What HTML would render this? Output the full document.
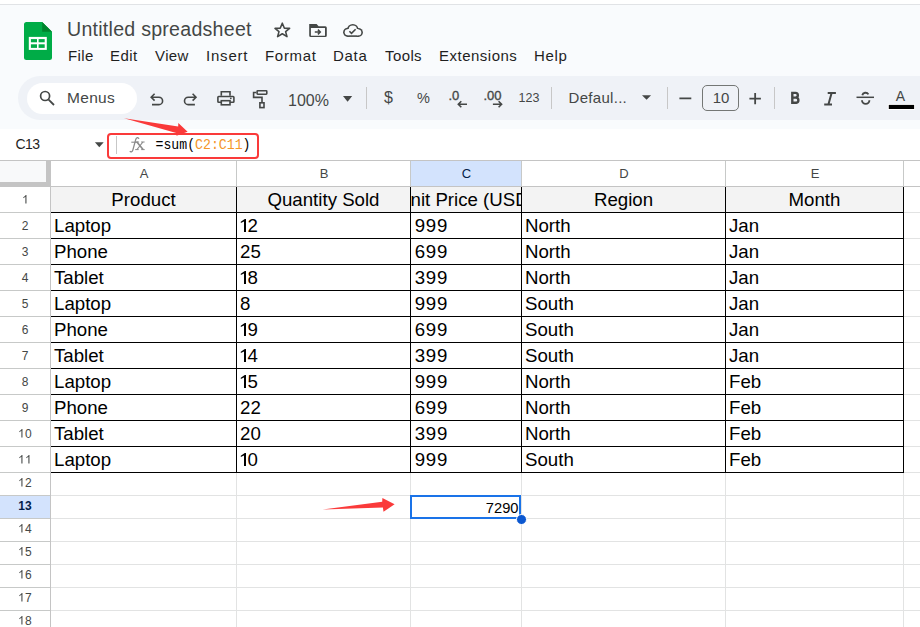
<!DOCTYPE html>
<html><head><meta charset="utf-8">
<style>
*{box-sizing:border-box;margin:0;padding:0}
html,body{width:920px;height:627px;overflow:hidden;background:#fff;font-family:"Liberation Sans",sans-serif;}
.a{position:absolute;white-space:nowrap}
#hdr{position:absolute;left:0;top:5px;width:920px;height:124px;background:#f9fbfd}
#topline{position:absolute;left:0;top:4px;width:920px;height:1px;background:#e1e3e6}
#tb{position:absolute;left:18px;top:76px;width:940px;height:44px;background:#eff2f7;border-radius:22px}
#search{position:absolute;left:27px;top:83px;width:110px;height:31px;background:#fff;border-radius:16px}
.menu{position:absolute;top:47px;font-size:15px;letter-spacing:0.4px;color:#1f1f1f;line-height:18px}
.tbt{position:absolute;font-size:15px;color:#444746;line-height:18px}
.sep{position:absolute;width:1px;background:#c7c7c7;top:87px;height:22px}
.vl{position:absolute;width:1px;background:#e2e3e3}
.hl{position:absolute;height:1px;background:#e2e3e3}
.rh{position:absolute;left:0;width:50px;text-align:center;font-size:12px;color:#444746}
.ch{position:absolute;top:160px;height:26px;line-height:26px;text-align:center;font-size:13px;color:#444746}
.c{position:absolute;font-size:18.67px;color:#000;line-height:26px;overflow:hidden;white-space:nowrap}
</style></head><body>
<div id="topline"></div>
<div id="hdr"></div>
<!-- logo -->
<svg class="a" style="left:24px;top:22px" width="28" height="38" viewBox="0 0 28 38">
<path d="M2.5 0H18.2L28 9.8V35.5a2.5 2.5 0 0 1-2.5 2.5H2.5A2.5 2.5 0 0 1 0 35.5V2.5A2.5 2.5 0 0 1 2.5 0z" fill="#00ac47"/>
<path d="M18.2 0L28 9.8H18.2z" fill="#00832d"/>
<rect x="4.8" y="14.9" width="18" height="13" fill="#fff"/>
<rect x="6.9" y="17.1" width="6.1" height="3.2" fill="#00ac47"/>
<rect x="14.6" y="17.1" width="6.1" height="3.2" fill="#00ac47"/>
<rect x="6.9" y="22.3" width="6.1" height="3.6" fill="#00ac47"/>
<rect x="14.6" y="22.3" width="6.1" height="3.6" fill="#00ac47"/>
</svg>
<div class="a" style="left:67px;top:18px;font-size:19.6px;letter-spacing:0.25px;color:#444746;line-height:22px">Untitled spreadsheet</div>
<div class="menu" style="left:68px">File</div>
<div class="menu" style="left:110px">Edit</div>
<div class="menu" style="left:155px">View</div>
<div class="menu" style="left:206px;letter-spacing:0.8px">Insert</div>
<div class="menu" style="left:265px;letter-spacing:0.7px">Format</div>
<div class="menu" style="left:333px;letter-spacing:0.7px">Data</div>
<div class="menu" style="left:385px">Tools</div>
<div class="menu" style="left:439px;letter-spacing:0.5px">Extensions</div>
<div class="menu" style="left:534px;letter-spacing:0.7px">Help</div>

<div id="tb"></div>
<div id="search"></div>
<div class="tbt" style="left:67px;top:89px;font-size:15.5px;letter-spacing:0.3px">Menus</div>
<div class="tbt" style="left:288px;top:92px;font-size:16px">100%</div>
<div class="tbt" style="left:384px;top:88.5px;font-size:16px">$</div>
<div class="tbt" style="left:417px;top:89px;font-size:14.5px">%</div>
<div class="tbt" style="left:518.5px;top:89px;font-size:12.5px">123</div>
<div class="tbt" style="left:568.5px;top:89px;letter-spacing:0.3px">Defaul...</div>
<div class="a" style="left:702px;top:85px;width:37px;height:26px;border:1px solid #747775;border-radius:5px"></div>
<div class="tbt" style="left:702.5px;top:89px;width:37px;text-align:center;font-size:15px">10</div>
<div class="sep" style="left:366px"></div>
<div class="sep" style="left:551px"></div>
<div class="sep" style="left:667px"></div>
<div class="sep" style="left:774px"></div>
<svg class="a" style="left:0;top:0" width="920" height="160" viewBox="0 0 920 160" fill="none" stroke="#444746" stroke-width="1.6">
 <!-- star -->
 <polygon points="282.3,23.2 284.4,28.3 289.6,28.4 285.6,31.6 287.0,36.6 282.3,33.7 277.6,36.6 279.0,31.6 275.0,28.4 280.2,28.3" stroke-linejoin="round"/>
 <!-- folder -->
 <path d="M309.2,24.1 H316.6 L318.6,26.2 H325.3 A1.5,1.5 0 0 1 326.8,27.7 V35.4 A1.5,1.5 0 0 1 325.3,36.9 H310.7 A1.5,1.5 0 0 1 309.2,35.4 Z M310.9,28 V35.7 H325 V28 Z" fill="#444746" fill-rule="evenodd" stroke="none"/>
 <path d="M314.8,32 H320.2 M317.9,29.6 L320.3,32 L317.9,34.4" stroke-width="1.5"/>
 <!-- cloud -->
 <g fill="#444746" stroke="none">
  <circle cx="352.8" cy="29.6" r="5.7"/><circle cx="347.7" cy="32.3" r="4.6"/><circle cx="358.4" cy="32.4" r="4.5"/><rect x="347.7" y="30" width="10.7" height="6.9"/>
 </g>
 <g fill="#f9fbfd" stroke="none">
  <circle cx="352.8" cy="29.6" r="4.1"/><circle cx="347.7" cy="32.3" r="3.0"/><circle cx="358.4" cy="32.4" r="2.9"/><rect x="347.7" y="29" width="10.7" height="6.3"/>
 </g>
 <polyline points="349.4,31.3 351.5,33.4 355.6,29.3"/>
 <!-- search -->
 <circle cx="45.1" cy="96" r="4.5" stroke-width="1.7"/>
 <path d="M48.6,99.6 L54,105" stroke-width="1.8"/>
 <!-- undo -->
 <path d="M152,104.6 H158.9 A3.7,3.7 0 0 0 158.9,97.2 H151.2 M154.6,93.8 L151.2,97.2 L154.6,100.6"/>
 <!-- redo -->
 <path d="M194.9,104.6 H188.2 A3.7,3.7 0 0 1 188.2,97.2 H196 M192.6,93.8 L196,97.2 L192.6,100.6"/>
 <!-- print -->
 <path d="M221.3,95.8 V91.7 H230 V95.8"/>
 <rect x="217.9" y="96.5" width="16" height="5.8" rx="0.8"/>
 <rect x="221.3" y="100.7" width="8.7" height="4.1" fill="#eff2f7"/>
 <circle cx="230.8" cy="98.3" r="0.9" fill="#444746" stroke="none"/>
 <!-- paint format -->
 <rect x="257.1" y="90.8" width="9.7" height="3.4" rx="0.6"/>
 <path d="M256.3,92.5 H253.6 V97.4 H262 V102.4"/>
 <rect x="259.9" y="102.8" width="4.1" height="4.8"/>
 <!-- dropdowns -->
 <path d="M343,96 H352.2 L347.6,101.7 Z" fill="#444746" stroke="none"/>
 <path d="M642,95.2 H651.1 L646.55,99.8 Z" fill="#444746" stroke="none"/>
 <!-- minus plus -->
 <path d="M679.4,98.4 H691.3 M749.4,98.6 H760.9 M755.15,92.9 V104.3" stroke-width="1.8"/>
 <!-- bold -->
 <path d="M792.3,92.9 H795.5 A2.35,2.35 0 0 1 795.5,97.6 H792.3 M792.3,97.6 H796.3 A2.6,2.6 0 0 1 796.3,102.7 H792.3 V92.9" stroke-width="2.4" stroke-linejoin="miter" stroke-linecap="square"/>
 <!-- italic -->
 <path d="M827.7,93 H835.9 M824.2,104.6 H832 M831.6,93 L828.4,104.6" stroke-width="2"/>
 <!-- strike -->
 <path d="M856.5,97.3 H874" stroke-width="1.5"/>
 <path d="M862.3,95.3 A3.3,3.3 0 0 1 868.4,94.4 M862,100.2 A3.7,3.7 0 0 0 869.4,100.2" stroke-width="1.9"/>
 <!-- dec arrows -->
 <path d="M458.3,104.2 H467 M461.3,101.2 L458.3,104.2 L461.3,107.2 M492.9,104.2 H501.6 M498.6,101.2 L501.6,104.2 L498.6,107.2" stroke-width="1.6"/>
 <!-- text color A bar -->
 <rect x="887.8" y="103.9" width="27.3" height="6.1" fill="#fff" stroke="none"/><rect x="888.8" y="104.9" width="25.3" height="4.1" fill="#000" stroke="none"/>
 <!-- red arrow 1 -->
</svg>
<div class="tbt" style="left:895.7px;top:87px;font-size:14px">A</div>
<div class="a" style="left:448.4px;top:88.8px;font-size:13px;-webkit-text-stroke:0.35px #444746;color:#444746;line-height:14px">.0</div>
<div class="a" style="left:483.5px;top:88.8px;font-size:13px;-webkit-text-stroke:0.35px #444746;color:#444746;line-height:14px">.00</div>

<!-- name box / formula -->
<div class="a" style="left:15.5px;top:136px;font-size:14px;letter-spacing:-0.6px;color:#1f1f1f;line-height:16px">C13</div>
<svg class="a" style="left:0;top:125px" width="300" height="40" viewBox="0 125 300 40">
 <path d="M94.9,142.3 H103.7 L99.3,147.2 Z" fill="#444746"/>
 <rect x="116" y="136" width="1" height="18" fill="#c7c7c7"/>
</svg>
<svg class="a" style="left:120px;top:130px" width="40" height="30" viewBox="120 130 40 30" fill="none" stroke="#8a8a8a">
 <path d="M138.8,138.9 C138.6,137.1 136.3,137.2 135.7,139.6 L132.9,149.9 C132.4,152 130.6,152.4 129.9,151.1" stroke-width="1.3"/>
 <path d="M131.3,142.2 H137.9" stroke-width="1.1"/>
 <path d="M136.9,142 L143.1,149.5" stroke-width="1.6"/>
 <path d="M142.9,142 L137,149.5" stroke-width="1.2"/>
 <path d="M135.4,142 H139.1 M141.1,142 H144.6 M135.2,149.6 H138.7 M141.2,149.6 H144.7" stroke-width="1"/>
</svg>
<div class="a" style="left:155.5px;top:136px;font-family:'Liberation Mono',monospace;font-size:13.2px;letter-spacing:0px;color:#000;line-height:16px;transform:scaleY(1.15);transform-origin:0 0">=sum(<span style="color:#f5962a">C2:C11</span>)</div>
<div class="a" style="left:107px;top:133px;width:152px;height:26px;border:2px solid #fa3a3a;border-radius:4px"></div>

<div id="grid">
<div class="a" style="left:0;top:160px;width:920px;height:467px;background:#fff"></div>
<div class="a" style="left:0;top:161px;width:46px;height:21px;background:#f8f9fa"></div>
<div class="a" style="left:46px;top:161px;width:4px;height:25px;background:#c4c4c4"></div>
<div class="a" style="left:0;top:182px;width:50px;height:4px;background:#c4c4c4"></div>
<div class="a" style="left:411px;top:161px;width:110px;height:25px;background:#d3e3fd"></div>
<div class="a" style="left:0;top:496px;width:50px;height:22px;background:#d3e3fd"></div>
<div class="a" style="left:51px;top:187px;width:852px;height:25px;background:#f3f3f3"></div>
<div class="a" style="left:51px;top:212px;width:869px;height:1px;background:#e2e3e3"></div>
<div class="a" style="left:0;top:212px;width:50px;height:1px;background:#c7c9c8"></div>
<div class="a" style="left:51px;top:238px;width:869px;height:1px;background:#e2e3e3"></div>
<div class="a" style="left:0;top:238px;width:50px;height:1px;background:#c7c9c8"></div>
<div class="a" style="left:51px;top:264px;width:869px;height:1px;background:#e2e3e3"></div>
<div class="a" style="left:0;top:264px;width:50px;height:1px;background:#c7c9c8"></div>
<div class="a" style="left:51px;top:290px;width:869px;height:1px;background:#e2e3e3"></div>
<div class="a" style="left:0;top:290px;width:50px;height:1px;background:#c7c9c8"></div>
<div class="a" style="left:51px;top:316px;width:869px;height:1px;background:#e2e3e3"></div>
<div class="a" style="left:0;top:316px;width:50px;height:1px;background:#c7c9c8"></div>
<div class="a" style="left:51px;top:342px;width:869px;height:1px;background:#e2e3e3"></div>
<div class="a" style="left:0;top:342px;width:50px;height:1px;background:#c7c9c8"></div>
<div class="a" style="left:51px;top:368px;width:869px;height:1px;background:#e2e3e3"></div>
<div class="a" style="left:0;top:368px;width:50px;height:1px;background:#c7c9c8"></div>
<div class="a" style="left:51px;top:394px;width:869px;height:1px;background:#e2e3e3"></div>
<div class="a" style="left:0;top:394px;width:50px;height:1px;background:#c7c9c8"></div>
<div class="a" style="left:51px;top:420px;width:869px;height:1px;background:#e2e3e3"></div>
<div class="a" style="left:0;top:420px;width:50px;height:1px;background:#c7c9c8"></div>
<div class="a" style="left:51px;top:446px;width:869px;height:1px;background:#e2e3e3"></div>
<div class="a" style="left:0;top:446px;width:50px;height:1px;background:#c7c9c8"></div>
<div class="a" style="left:51px;top:472px;width:869px;height:1px;background:#e2e3e3"></div>
<div class="a" style="left:0;top:472px;width:50px;height:1px;background:#c7c9c8"></div>
<div class="a" style="left:51px;top:495px;width:869px;height:1px;background:#e2e3e3"></div>
<div class="a" style="left:0;top:495px;width:50px;height:1px;background:#c7c9c8"></div>
<div class="a" style="left:51px;top:518px;width:869px;height:1px;background:#e2e3e3"></div>
<div class="a" style="left:0;top:518px;width:50px;height:1px;background:#c7c9c8"></div>
<div class="a" style="left:51px;top:541px;width:869px;height:1px;background:#e2e3e3"></div>
<div class="a" style="left:0;top:541px;width:50px;height:1px;background:#c7c9c8"></div>
<div class="a" style="left:51px;top:564px;width:869px;height:1px;background:#e2e3e3"></div>
<div class="a" style="left:0;top:564px;width:50px;height:1px;background:#c7c9c8"></div>
<div class="a" style="left:51px;top:587px;width:869px;height:1px;background:#e2e3e3"></div>
<div class="a" style="left:0;top:587px;width:50px;height:1px;background:#c7c9c8"></div>
<div class="a" style="left:51px;top:610px;width:869px;height:1px;background:#e2e3e3"></div>
<div class="a" style="left:0;top:610px;width:50px;height:1px;background:#c7c9c8"></div>
<div class="a" style="left:51px;top:633px;width:869px;height:1px;background:#e2e3e3"></div>
<div class="a" style="left:0;top:633px;width:50px;height:1px;background:#c7c9c8"></div>
<div class="a" style="left:236px;top:161px;width:1px;height:25px;background:#c7c9c8"></div>
<div class="a" style="left:236px;top:187px;width:1px;height:440px;background:#e2e3e3"></div>
<div class="a" style="left:410px;top:161px;width:1px;height:25px;background:#c7c9c8"></div>
<div class="a" style="left:410px;top:187px;width:1px;height:440px;background:#e2e3e3"></div>
<div class="a" style="left:521px;top:161px;width:1px;height:25px;background:#c7c9c8"></div>
<div class="a" style="left:521px;top:187px;width:1px;height:440px;background:#e2e3e3"></div>
<div class="a" style="left:725px;top:161px;width:1px;height:25px;background:#c7c9c8"></div>
<div class="a" style="left:725px;top:187px;width:1px;height:440px;background:#e2e3e3"></div>
<div class="a" style="left:903px;top:161px;width:1px;height:25px;background:#c7c9c8"></div>
<div class="a" style="left:903px;top:187px;width:1px;height:440px;background:#e2e3e3"></div>
<div class="a" style="left:0;top:160px;width:920px;height:1px;background:#c4c4c4"></div>
<div class="a" style="left:0;top:186px;width:920px;height:1px;background:#c4c4c4"></div>
<div class="a" style="left:50px;top:160px;width:1px;height:467px;background:#c4c4c4"></div>
<div class="a" style="left:51px;top:212px;width:853px;height:1px;background:#000"></div>
<div class="a" style="left:51px;top:238px;width:853px;height:1px;background:#000"></div>
<div class="a" style="left:51px;top:264px;width:853px;height:1px;background:#000"></div>
<div class="a" style="left:51px;top:290px;width:853px;height:1px;background:#000"></div>
<div class="a" style="left:51px;top:316px;width:853px;height:1px;background:#000"></div>
<div class="a" style="left:51px;top:342px;width:853px;height:1px;background:#000"></div>
<div class="a" style="left:51px;top:368px;width:853px;height:1px;background:#000"></div>
<div class="a" style="left:51px;top:394px;width:853px;height:1px;background:#000"></div>
<div class="a" style="left:51px;top:420px;width:853px;height:1px;background:#000"></div>
<div class="a" style="left:51px;top:446px;width:853px;height:1px;background:#000"></div>
<div class="a" style="left:51px;top:472px;width:853px;height:1px;background:#000"></div>
<div class="a" style="left:236px;top:187px;width:1px;height:286px;background:#000"></div>
<div class="a" style="left:410px;top:187px;width:1px;height:286px;background:#000"></div>
<div class="a" style="left:521px;top:187px;width:1px;height:286px;background:#000"></div>
<div class="a" style="left:725px;top:187px;width:1px;height:286px;background:#000"></div>
<div class="a" style="left:903px;top:187px;width:1px;height:286px;background:#000"></div>
<div class="ch" style="left:51.5px;top:161px;width:185px;color:#444746">A</div>
<div class="ch" style="left:237.5px;top:161px;width:173px;color:#444746">B</div>
<div class="ch" style="left:411.5px;top:161px;width:110px;color:#041e49">C</div>
<div class="ch" style="left:522.5px;top:161px;width:203px;color:#444746">D</div>
<div class="ch" style="left:726.5px;top:161px;width:177px;color:#444746">E</div>
<div class="rh" style="top:188px;height:25px;line-height:25px;"><svg width="6.67" height="8.59" viewBox="0 0 55.6 71.6" style="vertical-align:baseline"><path d="M37.3,71.6 V0 H30.5 C27,7 19,14.5 10.9,18 V26.5 C16.5,24.3 23.5,20 28.3,15.5 V71.6 Z" fill="#444746"/></svg></div>
<div class="rh" style="top:214px;height:25px;line-height:25px;">2</div>
<div class="rh" style="top:240px;height:25px;line-height:25px;">3</div>
<div class="rh" style="top:266px;height:25px;line-height:25px;">4</div>
<div class="rh" style="top:292px;height:25px;line-height:25px;">5</div>
<div class="rh" style="top:318px;height:25px;line-height:25px;">6</div>
<div class="rh" style="top:344px;height:25px;line-height:25px;">7</div>
<div class="rh" style="top:370px;height:25px;line-height:25px;">8</div>
<div class="rh" style="top:396px;height:25px;line-height:25px;">9</div>
<div class="rh" style="top:422px;height:25px;line-height:25px;"><svg width="6.67" height="8.59" viewBox="0 0 55.6 71.6" style="vertical-align:baseline"><path d="M37.3,71.6 V0 H30.5 C27,7 19,14.5 10.9,18 V26.5 C16.5,24.3 23.5,20 28.3,15.5 V71.6 Z" fill="#444746"/></svg>0</div>
<div class="rh" style="top:448px;height:25px;line-height:25px;"><svg width="6.67" height="8.59" viewBox="0 0 55.6 71.6" style="vertical-align:baseline"><path d="M37.3,71.6 V0 H30.5 C27,7 19,14.5 10.9,18 V26.5 C16.5,24.3 23.5,20 28.3,15.5 V71.6 Z" fill="#444746"/></svg><svg width="6.67" height="8.59" viewBox="0 0 55.6 71.6" style="vertical-align:baseline"><path d="M37.3,71.6 V0 H30.5 C27,7 19,14.5 10.9,18 V26.5 C16.5,24.3 23.5,20 28.3,15.5 V71.6 Z" fill="#444746"/></svg></div>
<div class="rh" style="top:472px;height:22px;line-height:22px;"><svg width="6.67" height="8.59" viewBox="0 0 55.6 71.6" style="vertical-align:baseline"><path d="M37.3,71.6 V0 H30.5 C27,7 19,14.5 10.9,18 V26.5 C16.5,24.3 23.5,20 28.3,15.5 V71.6 Z" fill="#444746"/></svg>2</div>
<div class="rh" style="top:495px;height:22px;line-height:22px;font-weight:bold;color:#041e49;">13</div>
<div class="rh" style="top:518px;height:22px;line-height:22px;"><svg width="6.67" height="8.59" viewBox="0 0 55.6 71.6" style="vertical-align:baseline"><path d="M37.3,71.6 V0 H30.5 C27,7 19,14.5 10.9,18 V26.5 C16.5,24.3 23.5,20 28.3,15.5 V71.6 Z" fill="#444746"/></svg>4</div>
<div class="rh" style="top:541px;height:22px;line-height:22px;"><svg width="6.67" height="8.59" viewBox="0 0 55.6 71.6" style="vertical-align:baseline"><path d="M37.3,71.6 V0 H30.5 C27,7 19,14.5 10.9,18 V26.5 C16.5,24.3 23.5,20 28.3,15.5 V71.6 Z" fill="#444746"/></svg>5</div>
<div class="rh" style="top:564px;height:22px;line-height:22px;"><svg width="6.67" height="8.59" viewBox="0 0 55.6 71.6" style="vertical-align:baseline"><path d="M37.3,71.6 V0 H30.5 C27,7 19,14.5 10.9,18 V26.5 C16.5,24.3 23.5,20 28.3,15.5 V71.6 Z" fill="#444746"/></svg>6</div>
<div class="rh" style="top:587px;height:22px;line-height:22px;"><svg width="6.67" height="8.59" viewBox="0 0 55.6 71.6" style="vertical-align:baseline"><path d="M37.3,71.6 V0 H30.5 C27,7 19,14.5 10.9,18 V26.5 C16.5,24.3 23.5,20 28.3,15.5 V71.6 Z" fill="#444746"/></svg>7</div>
<div class="rh" style="top:610px;height:22px;line-height:22px;"><svg width="6.67" height="8.59" viewBox="0 0 55.6 71.6" style="vertical-align:baseline"><path d="M37.3,71.6 V0 H30.5 C27,7 19,14.5 10.9,18 V26.5 C16.5,24.3 23.5,20 28.3,15.5 V71.6 Z" fill="#444746"/></svg>8</div>
<div class="c" style="left:51px;top:187px;width:185px;height:25px;display:flex;justify-content:center"><span style="flex:none">Product</span></div>
<div class="c" style="left:237px;top:187px;width:173px;height:25px;display:flex;justify-content:center"><span style="flex:none">Quantity Sold</span></div>
<div class="c" style="left:411px;top:187px;width:110px;height:25px;display:flex;justify-content:center"><span style="flex:none">Unit Price (USD)</span></div>
<div class="c" style="left:522px;top:187px;width:203px;height:25px;display:flex;justify-content:center"><span style="flex:none">Region</span></div>
<div class="c" style="left:726px;top:187px;width:177px;height:25px;display:flex;justify-content:center"><span style="flex:none">Month</span></div>
<div class="c" style="left:51px;top:213px;width:185px;height:25px;padding-left:3px;">Laptop</div>
<div class="c" style="left:237px;top:213px;width:173px;height:25px;padding-left:3px;"><svg width="7.60" height="13.10" viewBox="0 5.9 7.6 13.1" style="vertical-align:baseline"><path d="M4.0,19 V8.4 L0.8,10.0 V8.6 L4.8,5.9 H6.0 V19 Z" fill="#000"/></svg>2</div>
<div class="c" style="left:411px;top:213px;width:110px;height:25px;padding-left:3px;letter-spacing:0.7px;padding-left:3.8px;">999</div>
<div class="c" style="left:522px;top:213px;width:203px;height:25px;padding-left:3px;">North</div>
<div class="c" style="left:726px;top:213px;width:177px;height:25px;padding-left:3px;">Jan</div>
<div class="c" style="left:51px;top:239px;width:185px;height:25px;padding-left:3px;">Phone</div>
<div class="c" style="left:237px;top:239px;width:173px;height:25px;padding-left:3px;">25</div>
<div class="c" style="left:411px;top:239px;width:110px;height:25px;padding-left:3px;letter-spacing:0.7px;padding-left:3.8px;">699</div>
<div class="c" style="left:522px;top:239px;width:203px;height:25px;padding-left:3px;">North</div>
<div class="c" style="left:726px;top:239px;width:177px;height:25px;padding-left:3px;">Jan</div>
<div class="c" style="left:51px;top:265px;width:185px;height:25px;padding-left:3px;">Tablet</div>
<div class="c" style="left:237px;top:265px;width:173px;height:25px;padding-left:3px;"><svg width="7.60" height="13.10" viewBox="0 5.9 7.6 13.1" style="vertical-align:baseline"><path d="M4.0,19 V8.4 L0.8,10.0 V8.6 L4.8,5.9 H6.0 V19 Z" fill="#000"/></svg>8</div>
<div class="c" style="left:411px;top:265px;width:110px;height:25px;padding-left:3px;letter-spacing:0.7px;padding-left:3.8px;">399</div>
<div class="c" style="left:522px;top:265px;width:203px;height:25px;padding-left:3px;">North</div>
<div class="c" style="left:726px;top:265px;width:177px;height:25px;padding-left:3px;">Jan</div>
<div class="c" style="left:51px;top:291px;width:185px;height:25px;padding-left:3px;">Laptop</div>
<div class="c" style="left:237px;top:291px;width:173px;height:25px;padding-left:3px;">8</div>
<div class="c" style="left:411px;top:291px;width:110px;height:25px;padding-left:3px;letter-spacing:0.7px;padding-left:3.8px;">999</div>
<div class="c" style="left:522px;top:291px;width:203px;height:25px;padding-left:3px;">South</div>
<div class="c" style="left:726px;top:291px;width:177px;height:25px;padding-left:3px;">Jan</div>
<div class="c" style="left:51px;top:317px;width:185px;height:25px;padding-left:3px;">Phone</div>
<div class="c" style="left:237px;top:317px;width:173px;height:25px;padding-left:3px;"><svg width="7.60" height="13.10" viewBox="0 5.9 7.6 13.1" style="vertical-align:baseline"><path d="M4.0,19 V8.4 L0.8,10.0 V8.6 L4.8,5.9 H6.0 V19 Z" fill="#000"/></svg>9</div>
<div class="c" style="left:411px;top:317px;width:110px;height:25px;padding-left:3px;letter-spacing:0.7px;padding-left:3.8px;">699</div>
<div class="c" style="left:522px;top:317px;width:203px;height:25px;padding-left:3px;">South</div>
<div class="c" style="left:726px;top:317px;width:177px;height:25px;padding-left:3px;">Jan</div>
<div class="c" style="left:51px;top:343px;width:185px;height:25px;padding-left:3px;">Tablet</div>
<div class="c" style="left:237px;top:343px;width:173px;height:25px;padding-left:3px;"><svg width="7.60" height="13.10" viewBox="0 5.9 7.6 13.1" style="vertical-align:baseline"><path d="M4.0,19 V8.4 L0.8,10.0 V8.6 L4.8,5.9 H6.0 V19 Z" fill="#000"/></svg>4</div>
<div class="c" style="left:411px;top:343px;width:110px;height:25px;padding-left:3px;letter-spacing:0.7px;padding-left:3.8px;">399</div>
<div class="c" style="left:522px;top:343px;width:203px;height:25px;padding-left:3px;">South</div>
<div class="c" style="left:726px;top:343px;width:177px;height:25px;padding-left:3px;">Jan</div>
<div class="c" style="left:51px;top:369px;width:185px;height:25px;padding-left:3px;">Laptop</div>
<div class="c" style="left:237px;top:369px;width:173px;height:25px;padding-left:3px;"><svg width="7.60" height="13.10" viewBox="0 5.9 7.6 13.1" style="vertical-align:baseline"><path d="M4.0,19 V8.4 L0.8,10.0 V8.6 L4.8,5.9 H6.0 V19 Z" fill="#000"/></svg>5</div>
<div class="c" style="left:411px;top:369px;width:110px;height:25px;padding-left:3px;letter-spacing:0.7px;padding-left:3.8px;">999</div>
<div class="c" style="left:522px;top:369px;width:203px;height:25px;padding-left:3px;">North</div>
<div class="c" style="left:726px;top:369px;width:177px;height:25px;padding-left:3px;">Feb</div>
<div class="c" style="left:51px;top:395px;width:185px;height:25px;padding-left:3px;">Phone</div>
<div class="c" style="left:237px;top:395px;width:173px;height:25px;padding-left:3px;">22</div>
<div class="c" style="left:411px;top:395px;width:110px;height:25px;padding-left:3px;letter-spacing:0.7px;padding-left:3.8px;">699</div>
<div class="c" style="left:522px;top:395px;width:203px;height:25px;padding-left:3px;">North</div>
<div class="c" style="left:726px;top:395px;width:177px;height:25px;padding-left:3px;">Feb</div>
<div class="c" style="left:51px;top:421px;width:185px;height:25px;padding-left:3px;">Tablet</div>
<div class="c" style="left:237px;top:421px;width:173px;height:25px;padding-left:3px;">20</div>
<div class="c" style="left:411px;top:421px;width:110px;height:25px;padding-left:3px;letter-spacing:0.7px;padding-left:3.8px;">399</div>
<div class="c" style="left:522px;top:421px;width:203px;height:25px;padding-left:3px;">North</div>
<div class="c" style="left:726px;top:421px;width:177px;height:25px;padding-left:3px;">Feb</div>
<div class="c" style="left:51px;top:447px;width:185px;height:25px;padding-left:3px;">Laptop</div>
<div class="c" style="left:237px;top:447px;width:173px;height:25px;padding-left:3px;"><svg width="7.60" height="13.10" viewBox="0 5.9 7.6 13.1" style="vertical-align:baseline"><path d="M4.0,19 V8.4 L0.8,10.0 V8.6 L4.8,5.9 H6.0 V19 Z" fill="#000"/></svg>0</div>
<div class="c" style="left:411px;top:447px;width:110px;height:25px;padding-left:3px;letter-spacing:0.7px;padding-left:3.8px;">999</div>
<div class="c" style="left:522px;top:447px;width:203px;height:25px;padding-left:3px;">South</div>
<div class="c" style="left:726px;top:447px;width:177px;height:25px;padding-left:3px;">Feb</div>
<div class="a" style="left:410px;top:495px;width:111px;height:24px;border:2px solid #1a73e8"></div>
<div class="a" style="left:412px;top:497.5px;width:106.5px;height:20px;font-size:14.7px;line-height:20px;text-align:right;color:#000">7290</div>
<div class="a" style="left:516px;top:514px;width:11px;height:11px;border-radius:50%;background:#0b57d0;border:1px solid #fff"></div>
</div><!--/grid-->
<svg class="a" style="left:0;top:0" width="920" height="627" viewBox="0 0 920 627">
 <polygon points="124.1,118.2 178.2,126.6 178.3,123.1 187.6,131.7 176.5,135.8 176.3,133" fill="#fa3a3a"/>
 <polygon points="322.6,509.5 382.2,501.7 382.4,497.9 394.6,504.3 383.5,511.8 382.9,507.6" fill="#fa3a3a"/>
</svg>
</body></html>
